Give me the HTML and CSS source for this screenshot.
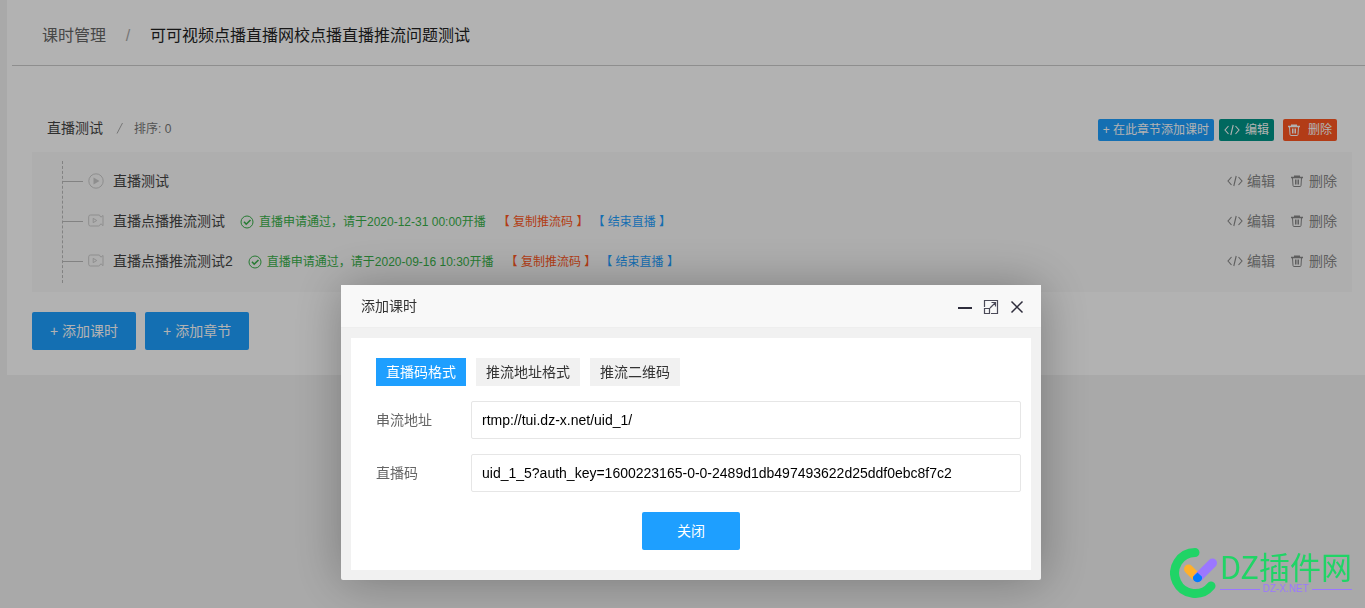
FILE: index.html
```html
<!DOCTYPE html>
<html lang="zh-CN">
<head>
<meta charset="utf-8">
<title>课时管理</title>
<link rel="stylesheet" href="styles.css">
</head>
<body>
<svg class="sprite" aria-hidden="true">
  <symbol id="code" viewBox="0 0 16 12"><path d="M4.500 2 1 6l3.500 4M11.500 2 15 6l-3.500 4M9.200 1 6.800 11" fill="none" stroke="currentColor" stroke-width="1.100"/></symbol>
  <symbol id="trash" viewBox="0 0 12 12"><path d="M0 2.500h12M3 1.200h6" fill="none" stroke="currentColor" stroke-width="1.300"/><path d="M1.500 3 2 10.500q.1 1 1 1h6q.9 0 1-1L10.500 3M4.500 4.500v5M6 4.500v5M7.500 4.500v5" fill="none" stroke="currentColor"/></symbol>
  <symbol id="check" viewBox="0 0 14 14"><circle cx="7" cy="7" r="6" fill="none" stroke="currentColor"/><path d="m4 6.800 2.200 2.400L10.500 5" fill="none" stroke="currentColor" stroke-width="1.600"/></symbol>
  <symbol id="play" viewBox="0 0 16 16"><circle cx="8" cy="8" r="7.200" fill="none" stroke="currentColor"/><path d="M5.500 4.500v7l6-3.500z" fill="currentColor"/></symbol>
  <symbol id="video" viewBox="0 0 16 16"><path d="M11 2H2.500Q.7 2 .7 3.800v7.400q0 1.800 1.800 1.800h8q1.300 0 1.600-1.500l1-.6 1.900 1.800V2.500L13.100 4l-1-.6Q11.900 2 11 2zM5.200 5.300v4.400L8.700 7.500z" fill="none" stroke="currentColor"/></symbol>
</svg>

<main class="page">
  <nav class="crumbs">
    <a href="#">课时管理</a><span class="slash">/</span><span class="current">可可视频点播直播网校点播直播推流问题测试</span>
  </nav>
  <section class="chapter">
    <header class="chapter-head">
      <h2 class="chapter-title">直播测试</h2>
      <svg class="chapter-slash" viewBox="0 0 31 14" aria-hidden="true"><path d="M14 12.500 19.500 2" stroke="currentColor"/></svg>
      <span class="order">排序: 0</span>
      <div class="chapter-tools">
        <button class="btn-xs blue">+ 在此章节添加课时</button>
        <button class="btn-xs green"><svg class="i-code"><use href="#code"/></svg>编辑</button>
        <button class="btn-xs red"><svg class="i-trash"><use href="#trash"/></svg>删除</button>
      </div>
    </header>
    <div class="lessons">
      <ul class="tree">
        <li class="lesson">
          <svg class="i-kind"><use href="#play"/></svg><span class="name">直播测试</span>
          <div class="actions"><a href="#"><svg class="i-code"><use href="#code"/></svg>编辑</a><a href="#" class="del"><svg class="i-trash"><use href="#trash"/></svg>删除</a></div>
        </li>
        <li class="lesson">
          <svg class="i-kind"><use href="#video"/></svg><span class="name">直播点播推流测试</span>
          <span class="status"><svg class="i-check"><use href="#check"/></svg>直播申请通过，请于2020-12-31 00:00开播</span>
          <a href="#" class="copy">【 复制推流码 】</a><a href="#" class="end">【 结束直播 】</a>
          <div class="actions"><a href="#"><svg class="i-code"><use href="#code"/></svg>编辑</a><a href="#" class="del"><svg class="i-trash"><use href="#trash"/></svg>删除</a></div>
        </li>
        <li class="lesson">
          <svg class="i-kind"><use href="#video"/></svg><span class="name">直播点播推流测试2</span>
          <span class="status"><svg class="i-check"><use href="#check"/></svg>直播申请通过，请于2020-09-16 10:30开播</span>
          <a href="#" class="copy">【 复制推流码 】</a><a href="#" class="end">【 结束直播 】</a>
          <div class="actions"><a href="#"><svg class="i-code"><use href="#code"/></svg>编辑</a><a href="#" class="del"><svg class="i-trash"><use href="#trash"/></svg>删除</a></div>
        </li>
      </ul>
    </div>
    <div class="adders">
      <button class="btn blue">+ 添加课时</button>
      <button class="btn blue">+ 添加章节</button>
    </div>
  </section>
</main>

<div class="shade"></div>

<div class="dialog" role="dialog" aria-labelledby="dialog-title">
  <header class="dialog-head">
    <h3 class="dialog-title" id="dialog-title">添加课时</h3>
    <button class="win" aria-label="最小化"><svg viewBox="0 0 16 16"><path d="M1 9h14" stroke="#2e2d3c" stroke-width="2"/></svg></button>
    <button class="win" aria-label="最大化"><svg viewBox="0 0 16 16"><path d="M1.500 8V1.500h13v13H8M1.500 9.500h5v5h-5zM7 9l5.500-5.500M8.500 3.500h4v4" fill="none" stroke="#4b4a58" stroke-width="1.200"/></svg></button>
    <button class="win" aria-label="关闭窗口"><svg viewBox="0 0 16 16"><path d="m2.500 2.500 11 11m0-11-11 11" stroke="#2e2d3c" stroke-width="1.500"/></svg></button>
  </header>
  <div class="dialog-body">
    <form class="panel">
      <div class="tabs">
        <button type="button" class="tab active">直播码格式</button>
        <button type="button" class="tab">推流地址格式</button>
        <button type="button" class="tab">推流二维码</button>
      </div>
      <div class="field"><label for="addr">串流地址</label><input id="addr" type="text" value="rtmp://tui.dz-x.net/uid_1/"></div>
      <div class="field"><label for="key">直播码</label><input id="key" type="text" value="uid_1_5?auth_key=1600223165-0-0-2489d1db497493622d25ddf0ebc8f7c2"></div>
      <button type="button" class="btn blue close">关闭</button>
    </form>
  </div>
</div>

<div class="brand">
  <svg class="brand-logo" viewBox="0 0 48 52"><path d="M25 5.500A20.500 20.500 0 1 0 41 39" fill="none" stroke="#20d466" stroke-width="9" stroke-linecap="round"/><path d="m18.500 22 6 6" stroke="#ffb02a" stroke-width="9" stroke-linecap="round"/><path d="M42.500 16 28 30.500" stroke="#9b77ff" stroke-width="9" stroke-linecap="round"/><path d="M27.500 25.500l4.500 4.200a4.600 4.600 0 1 1-9 0z" fill="#007bff"/></svg>
  <div class="brand-words">
    <span class="brand-name">DZ插件网</span>
    <span class="brand-site">DZ-X.NET</span>
  </div>
</div>
</body>
</html>
```

FILE: styles.css
```css
* { box-sizing: border-box; }
body {
  margin: 0;
  min-height: 100vh;
  background: #f2f2f2;
  color: #333;
  font: 14px/20px "Liberation Sans", "Noto Sans CJK SC", sans-serif;
}
button, input { font: inherit; }
button { border: 0; cursor: pointer; }
a { color: inherit; text-decoration: none; }
h2, h3 { margin: 0; font: inherit; }
.sprite { display: none; }

.page { margin-left: 7px; padding-bottom: 25px; background: #fff; }
.crumbs {
  display: flex;
  align-items: center;
  height: 66px;
  margin-left: 5px;
  padding: 6px 30px 0;
  border-bottom: 1px solid #ccc;
  font-size: 16px;
  color: #666;
}
.crumbs .slash { width: 44px; text-align: center; color: #aaa; }
.crumbs .current { color: #222; }

.chapter { padding: 44px 13px 0 25px; }
.chapter-head { display: flex; align-items: center; height: 36px; margin-bottom: 6px; padding: 0 15px; }
.chapter-title { color: #444; }
.chapter-slash { width: 31px; height: 14px; color: #aaa; }
.order { padding-top: 2px; font-size: 12px; color: #777; }
.chapter-tools { display: flex; align-items: center; gap: 5px; height: 36px; padding-top: 4px; margin-left: auto; }
.btn-xs {
  display: flex;
  align-items: center;
  gap: 5px;
  height: 22px;
  padding: 0 5px;
  border-radius: 2px;
  color: #fff;
  font-size: 12px;
}
.btn-xs.red { margin-left: 4px; gap: 8px; }
.blue { background: #1e9fff; }
.green { background: #009688; }
.red { background: #ff5722; }
.i-code { width: 16px; height: 12px; }
.i-trash { width: 12px; height: 12px; }
.i-check { width: 14px; height: 14px; }
.i-kind { width: 16px; height: 16px; margin-right: 9px; color: #ccc; }

.lessons { padding: 9px 15px 9px 30px; background: #f9f9f9; }
.tree { margin: 0; padding: 0 0 2px; border-left: 1px dashed #bbb; list-style: none; }
.lesson { display: flex; align-items: center; height: 40px; }
.lesson::before { content: ""; width: 20px; margin-right: 5px; border-top: 1px solid #bbb; }
.name { color: #444; }
.status, .copy, .end { padding-top: 2px; font-size: 12px; }
.status { display: flex; align-items: center; gap: 5px; margin: 0 12px 0 15px; color: #38b14a; }
.copy { margin-right: 4px; color: #ff5722; }
.end { color: #1e9fff; }
.actions { display: flex; gap: 16px; margin-left: auto; color: #888; }
.actions a { display: flex; align-items: center; gap: 4px; }
.actions .del { gap: 6px; }

.adders { display: flex; gap: 9px; margin-top: 20px; }
.btn { height: 38px; padding: 0 18px; border-radius: 2px; color: #fff; }

.shade { position: fixed; inset: 0; background: rgba(0, 0, 0, .3); }

.dialog {
  position: fixed;
  top: 285px;
  left: 341px;
  width: 700px;
  border-radius: 2px;
  background: #f1f1f1;
  box-shadow: 1px 1px 50px rgba(0, 0, 0, .3);
}
.dialog-head {
  display: flex;
  align-items: center;
  gap: 10px;
  height: 43px;
  padding: 0 16px 0 20px;
  border-bottom: 1px solid #eee;
  background: #f8f8f8;
}
.dialog-title { margin-right: auto; }
.win { display: flex; padding: 2px 0 0; background: none; }
.win svg { width: 16px; height: 16px; }
.dialog-body { padding: 10px; }
.panel { display: flex; flex-direction: column; padding: 20px 10px 20px 25px; background: #fff; }
.tabs { display: flex; gap: 10px; margin-bottom: 15px; }
.tab { height: 28px; padding: 0 10px; background: #f1f1f1; color: #333; }
.tab.active { background: #1e9fff; color: #fff; }
.field { display: flex; align-items: center; margin-bottom: 15px; }
.field label { width: 95px; color: #666; }
.field input {
  flex: 1;
  height: 38px;
  padding: 0 10px;
  border: 1px solid #e6e6e6;
  border-radius: 2px;
  background: #fff;
  color: #000;
}
.close { align-self: center; width: 98px; margin: 5px 15px 0 0; }

.brand { position: fixed; right: 13px; bottom: 9px; display: flex; align-items: center; gap: 2px; }
.brand-logo { width: 48px; height: 52px; }
.brand-words { display: flex; flex-direction: column; padding-bottom: 4px; }
.brand-name { font: 31px/36px "Noto Sans CJK SC", sans-serif; color: #20d466; }
.brand-site { display: flex; align-items: center; gap: 3px; font: 10px/10px "Liberation Sans", sans-serif; color: #9b77ff; }
.brand-site::before, .brand-site::after { content: ""; flex: 1; border-top: 1px solid #9b77ff; }
```
